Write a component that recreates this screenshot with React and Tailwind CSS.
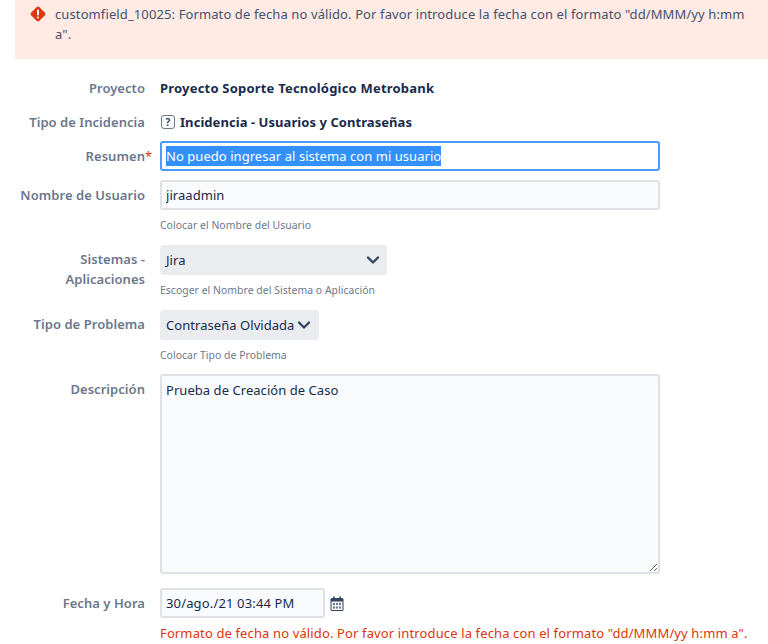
import { useState } from "react";

function AlertIcon() {
  return (
    <svg width="16" height="16" viewBox="0 0 16 16" className="shrink-0">
      <path d="M6.6 1.3a2 2 0 0 1 2.8 0l5.3 5.3a2 2 0 0 1 0 2.8l-5.3 5.3a2 2 0 0 1-2.8 0L1.3 9.4a2 2 0 0 1 0-2.8z" fill="#de350b" />
      <rect x="7" y="3.5" width="2" height="6" rx="1" fill="#fff" />
      <circle cx="8" cy="11.5" r="1.1" fill="#fff" />
    </svg>
  );
}

function Chevron() {
  return (
    <svg width="14" height="10" viewBox="0 0 14 10" fill="none" className="shrink-0">
      <path d="M2 2.5l5 5 5-5" stroke="#344563" strokeWidth="2.4" strokeLinecap="round" strokeLinejoin="round" />
    </svg>
  );
}

function CalendarIcon() {
  return (
    <svg width="14" height="15" viewBox="0 0 14 15" className="shrink-0">
      <rect x="0.5" y="2" width="13" height="13" rx="1.5" fill="#344563" />
      <rect x="3" y="0.5" width="1.6" height="3" fill="#344563" />
      <rect x="9.4" y="0.5" width="1.6" height="3" fill="#344563" />
      <rect x="1.5" y="5.5" width="11" height="8.5" fill="#f4f5f7" />
      <path d="M3 7h2v2H3zM6 7h2v2H6zM9 7h2v2H9zM3 10.5h2v2H3zM6 10.5h2v2H6zM9 10.5h2v2H9z" fill="#6b778c" />
    </svg>
  );
}

function Row({ label, children, className = "", labelClass = "pt-[5px]" }) {
  return (
    <div className={`flex gap-[15px] ${className}`}>
      <div className={`w-[130px] shrink-0 whitespace-nowrap text-right font-semibold text-[#6b778c] ${labelClass}`}>{label}</div>
      <div className="min-w-0 flex-1">{children}</div>
    </div>
  );
}

function Help({ children }) {
  return <div className="mt-[7px] h-[16px] text-[10.4px] leading-[16px] text-[#6b778c]">{children}</div>;
}

export default function App() {
  const [desc, setDesc] = useState("Prueba de Creación de Caso");
  const [user, setUser] = useState("jiraadmin");
  const [fecha, setFecha] = useState("30/ago./21 03:44 PM");

  return (
    <div className="h-[644px] overflow-hidden bg-white text-[13px] leading-[20px] tracking-[0.05px] text-[#172b4d] font-['Noto_Sans',sans-serif]">
      <div className="ml-[15px] flex h-[59px] gap-[9px] rounded-bl-[3px] bg-[#ffeae4] pl-[15px] pr-[20px] pt-[4px]">
        <div className="pt-[2px]">
          <AlertIcon />
        </div>
        <p className="tracking-[0.11px] text-[#42526e]">
          customfield_10025: Formato de fecha no válido. Por favor introduce la fecha con el formato "dd/MMM/yy h:mm a".
        </p>
      </div>

      <div className="ml-[15px] w-[645px] pt-[19px]">
        <Row label="Proyecto" labelClass="">
          <span className="font-bold tracking-[0.2px]">Proyecto Soporte Tecnológico Metrobank</span>
        </Row>

        <Row label="Tipo de Incidencia" labelClass="" className="mt-[14px]">
          <div className="flex items-center gap-[5px]">
            <span className="ml-[1px] flex h-[14px] w-[14px] items-center justify-center rounded-[3px] border border-[#6b778c] text-[10px] font-bold leading-none text-[#344563]">?</span>
            <span className="font-bold tracking-[0.06px]">Incidencia - Usuarios y Contraseñas</span>
          </div>
        </Row>

        <Row
          label={
            <span className="relative">
              Resumen<span className="absolute left-full top-[-1px] font-normal text-[#de350b]">*</span>
            </span>
          }
          className="mt-[9px]"
        >
          <div className="flex h-[30px] w-[500px] items-center rounded-[3px] border-2 border-[#4c9aff] bg-white px-[4px]">
            <span className="bg-[#3390ff] text-white">No puedo ingresar al sistema con mi usuario</span>
          </div>
        </Row>

        <Row label="Nombre de Usuario" className="mt-[9px]">
          <input
            value={user}
            onChange={(e) => setUser(e.target.value)}
            className="block h-[30px] w-[500px] rounded-[3px] border-2 border-[#dfe1e6] bg-[#fafbfc] px-[4px] outline-none"
          />
          <Help>Colocar el Nombre del Usuario</Help>
        </Row>

        <Row label={<>Sistemas -<br />Aplicaciones</>} className="mt-[12px]" labelClass="pt-[4px]">
          <div className="flex h-[30px] w-[227px] items-center justify-between rounded-[3px] bg-[#ebecf0] pl-[6px] pr-[7px]">
            <span>Jira</span>
            <Chevron />
          </div>
          <Help>Escoger el Nombre del Sistema o Aplicación</Help>
        </Row>

        <Row label="Tipo de Problema" className="mt-[12px]" labelClass="pt-[4px]">
          <div className="flex h-[30px] w-[159px] items-center justify-between rounded-[3px] bg-[#ebecf0] pl-[6px] pr-[8px]">
            <span className="whitespace-nowrap">Contraseña Olvidada</span>
            <Chevron />
          </div>
          <Help>Colocar Tipo de Problema</Help>
        </Row>

        <Row label="Descripción" className="mt-[11px]">
          <textarea
            value={desc}
            onChange={(e) => setDesc(e.target.value)}
            className="block h-[200px] w-[500px] resize rounded-[3px] border-2 border-[#dfe1e6] bg-[#fafbfc] px-[4px] py-[4px] outline-none"
          />
        </Row>

        <Row label="Fecha y Hora" className="mt-[14px]">
          <div className="flex items-center gap-[5px]">
            <input
              value={fecha}
              onChange={(e) => setFecha(e.target.value)}
              className="block h-[30px] w-[165px] rounded-[3px] border-2 border-[#dfe1e6] bg-[#fafbfc] px-[4px] tracking-[0.15px] outline-none"
            />
            <CalendarIcon />
          </div>
          <div className="mt-[5px] whitespace-nowrap tracking-[0.13px] text-[#de350b]">
            Formato de fecha no válido. Por favor introduce la fecha con el formato "dd/MMM/yy h:mm a".
          </div>
        </Row>
      </div>
    </div>
  );
}
